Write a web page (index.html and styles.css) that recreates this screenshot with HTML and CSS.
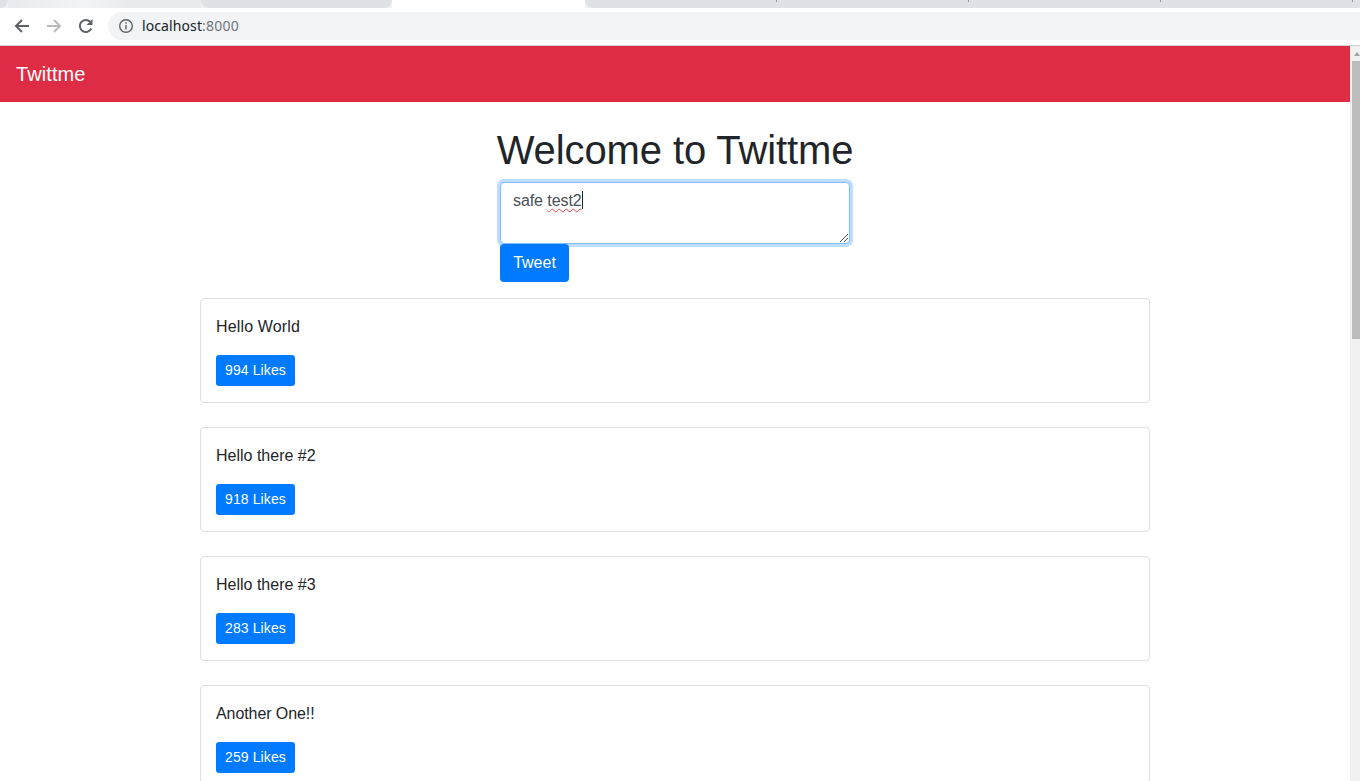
FILE: index.html
```html
<!DOCTYPE html>
<html lang="en">
<head>
<meta charset="utf-8">
<title>Twittme</title>
<link rel="stylesheet" href="styles.css">
</head>
<body>
<header class="browser">
  <div class="tabstrip">
    <div class="tab-dark tab-zero"></div>
    <div class="tab-first"></div>
    <div class="tab-dark tab-second"></div>
    <div class="tab-active"></div>
    <div class="tab-dark tab-rest">
      <span class="tab-cell"></span><span class="tab-cell"></span><span class="tab-cell"></span><span class="tab-cell"></span>
    </div>
  </div>
  <div class="toolbar">
    <button class="tool" aria-label="Back">
      <svg width="18" height="18" viewBox="0 0 18 18"><path d="M16 9H3.500M9 3L3 9l6 6" fill="none" stroke="#5f6368" stroke-width="2"/></svg>
    </button>
    <button class="tool" aria-label="Forward">
      <svg width="18" height="18" viewBox="0 0 18 18"><path d="M2 9h12.500M9 3l6 6-6 6" fill="none" stroke="#b8babd" stroke-width="2"/></svg>
    </button>
    <button class="tool" aria-label="Reload">
      <svg width="18" height="18" viewBox="0 0 18 18"><path d="M14.300 11.500A6 6 0 1 1 13.200 4.800" fill="none" stroke="#5f6368" stroke-width="2"/><path d="M15.500 2v6h-6z" fill="#5f6368"/></svg>
    </button>
    <div class="omnibox">
      <svg class="info" width="16" height="16" viewBox="0 0 16 16"><circle cx="8" cy="8" r="6.300" fill="none" stroke="#5f6368" stroke-width="1.400"/><path d="M7.300 7h1.400v4.500H7.300zM7.300 4.300h1.400v1.500H7.300z" fill="#5f6368"/></svg>
      <span class="url"><span class="host">localhost</span><span class="port">:8000</span></span>
    </div>
  </div>
  <div class="toolbar-line"></div>
</header>
<div class="viewport">
  <div class="page">
    <nav class="navbar"><a class="brand">Twittme</a></nav>
    <main class="content">
      <section class="composer">
        <h1 class="title">Welcome to Twittme</h1>
        <div class="form">
          <div class="textarea">
            <span class="typed">safe <span class="misspelt">test2</span></span><span class="caret"></span>
            <svg class="grip" width="8" height="8" viewBox="0 0 8 8"><path d="M0 8L8 0M4 8l4-4" stroke="#555" stroke-width="1" fill="none"/></svg>
          </div>
          <button class="btn-tweet">Tweet</button>
        </div>
      </section>
      <section class="feed">
        <article class="card"><p class="card-text card-text-wide">Hello World</p><button class="btn-like">994 Likes</button></article>
        <article class="card"><p class="card-text">Hello there #2</p><button class="btn-like">918 Likes</button></article>
        <article class="card"><p class="card-text">Hello there #3</p><button class="btn-like">283 Likes</button></article>
        <article class="card"><p class="card-text card-text-tight">Another One!!</p><button class="btn-like">259 Likes</button></article>
      </section>
    </main>
  </div>
  <div class="scrollbar">
    <div class="sb-arrow"></div>
    <div class="sb-thumb"></div>
  </div>
</div>
</body>
</html>
```
FILE: styles.css
```css
* { box-sizing: border-box; }
html, body { margin: 0; height: 100%; overflow: hidden; background: #fff; }
body { font-family: "Liberation Sans", Arial, sans-serif; display: flex; flex-direction: column; color: #212529; }

.browser { flex: 0 0 46px; background: #fff; display: flex; flex-direction: column; }
.tabstrip { height: 8px; display: flex; background: #f0f1f3; }
.tab-zero { width: 8px; border-bottom-right-radius: 8px; }
.tab-first { width: 193px; background: linear-gradient(90deg, #e8eaed 0, #f3f4f6 77px, #e8eaed 122px); }
.tab-dark { background: #dee1e6; }
.tab-second { width: 191px; border-radius: 0 0 8px 8px; }
.tab-active { width: 193px; background: #fff; }
.tab-rest { flex: 1; border-bottom-left-radius: 8px; display: flex; }
.tab-cell { width: 192px; height: 8px; border-right: 1px solid #8f9297; clip-path: inset(0 0 6px 0); }
.toolbar { margin-top: 4px; height: 28px; display: flex; align-items: center; padding-left: 6px; }
.tool { width: 32px; height: 28px; border: 0; padding: 0; background: none; display: flex; align-items: center; justify-content: center; }
.omnibox { flex: 1; height: 28px; margin-left: 6px; background: #f1f3f4; border-radius: 14px 0 0 14px; display: flex; align-items: center; padding-left: 10px; }
.info { flex: none; }
.url { margin-left: 8px; padding-bottom: 2px; font: 14px "Noto Sans", sans-serif; letter-spacing: .1px; }
.host { color: #202124; }
.port { color: #70757a; letter-spacing: .2px; }
.toolbar-line { margin-top: 5px; height: 1px; background: #d0d2d5; }

.viewport { flex: 1; display: flex; min-height: 0; }
.page { flex: 1; min-width: 0; overflow: hidden; }
.navbar { height: 56px; background: #dd2c44; padding: 0 16px; display: flex; align-items: center; }
.brand { color: #fff; font-size: 20px; letter-spacing: .08px; }
.content { padding-top: 24px; }
.composer { display: flex; flex-direction: column; align-items: center; }
.title { margin: 0 0 8px; font-size: 40px; line-height: 48px; font-weight: 400; letter-spacing: -.11px; }
.form { width: 350px; }
.textarea { position: relative; height: 62px; padding: 6px 12px; border: 1px solid #80bdff; border-radius: 4px; box-shadow: 0 0 0 3px rgba(0,123,255,.25); font-size: 16px; line-height: 24px; color: #495057; background: #fff; }
.typed { letter-spacing: -.08px; }
.misspelt { text-decoration: underline wavy #e8434b; text-decoration-thickness: 1px; text-underline-offset: 2px; text-decoration-skip-ink: none; }
.caret { display: inline-block; width: 1px; height: 18px; background: #212529; vertical-align: -3px; }
.grip { position: absolute; right: 1px; bottom: 1px; }
.btn-tweet { display: block; height: 38px; width: 69px; padding: 0; border: 0; border-radius: 4px; background: #007bff; color: #fff; font: 16px "Liberation Sans", Arial, sans-serif; }
.feed { width: 950px; margin: 16px auto 0; display: flex; flex-direction: column; gap: 24px; }
.card { height: 105px; flex: none; padding: 16px 15px; border: 1px solid #dfdfdf; border-radius: 4px; background: #fff; }
.card-text { margin: 0 0 16px; font-size: 16px; line-height: 24px; }
.card-text-wide { letter-spacing: .15px; }
.card-text-tight { letter-spacing: -.08px; }
.btn-like { display: block; width: 79px; height: 31px; padding: 0 0 2px; border: 0; border-radius: 3.2px; background: #007bff; color: #fff; font: 14px "Liberation Sans", Arial, sans-serif; letter-spacing: .1px; }

.scrollbar { flex: 0 0 10px; background: #f1f1f1; display: flex; flex-direction: column; align-items: flex-end; }
.sb-arrow { margin: 6px 0 5px; width: 0; height: 0; border-left: 3px solid transparent; border-right: 3px solid transparent; border-bottom: 4px solid #a3a3a3; }
.sb-thumb { width: 8px; height: 278px; background: #bcbcbc; }
```
